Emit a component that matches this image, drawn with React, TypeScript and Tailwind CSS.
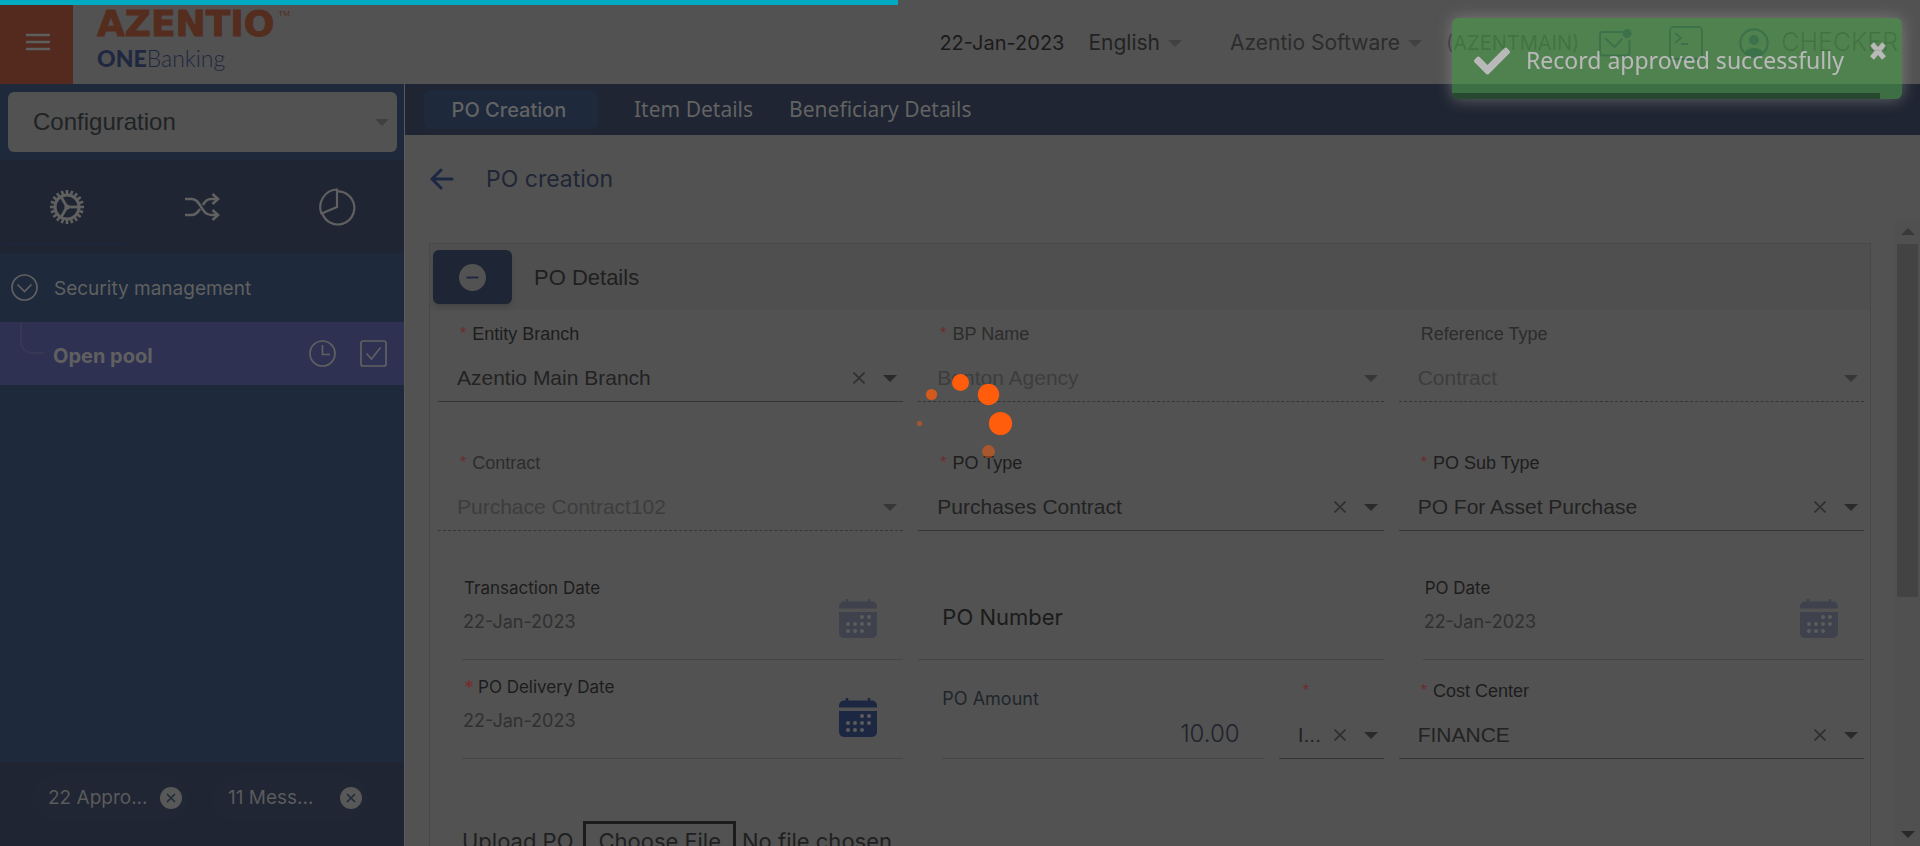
import React, { useId } from "react";
import { FaCheck } from "react-icons/fa";

const inter = "font-[Inter,sans-serif]";
const arial = "font-['Liberation_Sans',Arial,sans-serif]";
const humanist = "font-['Noto_Sans',sans-serif]";

function Caret({ className = "" }: { className?: string }) {
  return (
    <svg width="14" height="7" viewBox="0 0 14 7" className={`shrink-0 ${className}`} aria-hidden="true">
      <path d="M0 0h14L7 7z" fill="currentColor" />
    </svg>
  );
}

function GearIcon() {
  const teeth = Array.from({ length: 20 }, (_, i) => i * 18);
  return (
    <svg width="34" height="34" viewBox="-17 -17 34 34" fill="none" stroke="currentColor" aria-hidden="true">
      <circle r="12" strokeWidth="3" />
      {teeth.map((a) => (
        <path key={a} d="M13 0H17" strokeWidth="2.6" transform={`rotate(${a})`} />
      ))}
      <circle r="2.6" fill="currentColor" stroke="none" />
      {[0, 120, 240].map((a) => (
        <path key={a} d="M0 0H12" strokeWidth="2.8" transform={`rotate(${a})`} />
      ))}
    </svg>
  );
}

function ShuffleIcon() {
  return (
    <svg width="36" height="30" viewBox="0 0 36 30" fill="none" stroke="currentColor" strokeWidth="2.6" aria-hidden="true">
      <path d="M1 7H8C17 7 17 23 27 23H33" />
      <path d="M1 23H8C12 23 14 20 16 17M19 13C21 9 23 7 27 7H33" />
      <path d="M28.500 2L34 7L28.500 12M28.500 18L34 23L28.500 28" />
    </svg>
  );
}

function PieIcon() {
  return (
    <svg width="38" height="38" viewBox="0 0 38 38" fill="none" stroke="currentColor" strokeWidth="2.2" aria-hidden="true">
      <path d="M19 1.500V19L3.500 25.500A17.500 17.500 0 0 1 19 1.500Z" />
      <path d="M19 3.500A16.500 16.500 0 1 1 4.500 26" />
    </svg>
  );
}

function CalendarIcon() {
  const dots = [[23, 18], [30, 18], [9, 25], [16, 25], [23, 25], [30, 25], [9, 32], [16, 32], [23, 32]];
  return (
    <svg width="38" height="39" viewBox="0 0 38 39" aria-hidden="true">
      <path d="M8 0v4M30 0v4" stroke="currentColor" strokeWidth="2.500" />
      <path d="M5 2.500H33A5 5 0 0 1 38 7.500V9.500H0V7.500A5 5 0 0 1 5 2.500Z" fill="currentColor" />
      <path d="M0 13H38V34A5 5 0 0 1 33 39H5A5 5 0 0 1 0 34Z" fill="currentColor" />
      {dots.map(([x, y]) => (
        <circle key={`${x}-${y}`} cx={x} cy={y} r="2" fill="#5c5c5c" />
      ))}
    </svg>
  );
}

function Star() {
  return <span className="mr-1.5 text-base leading-4 text-[#6d2b2c]">*</span>;
}

type SelectProps = { label?: string; name?: string; value: string; required?: boolean; disabled?: boolean; compact?: boolean; short?: boolean };

function SelectField({ label, name, value, required, disabled, compact, short }: SelectProps) {
  const id = useId();
  return (
    <div className={`flex flex-col border-b border-[#363636] ${disabled ? "border-dashed" : ""} ${short ? "h-[86px]" : "h-[92px]"} ${arial}`}>
      <label htmlFor={id} className={`flex h-6 items-center text-lg ${short ? "mt-1.5" : "mt-3"} ${compact ? "pl-6" : "pl-[22px]"} ${disabled ? "text-[#2c2c2c]" : "text-[#1d1d1d]"}`}>
        {required && <Star />}
        {label}
      </label>
      <div className="mt-4 flex h-8 items-center pr-1.5 pl-[19px]">
        <select id={id} aria-label={label ? undefined : name} disabled={disabled} className={`min-w-0 flex-1 appearance-none bg-transparent text-[21px] leading-8 opacity-100 outline-none ${disabled ? "text-[#3d3d3d]" : "text-[#222]"}`}>
          <option>{value}</option>
        </select>
        {!disabled && (
          <button type="button" aria-label={`Clear ${label ?? name}`} className="mr-[18px] shrink-0 text-[#2f2f2f]">
            <svg width="12" height="12" viewBox="0 0 12 12" stroke="currentColor" strokeWidth="1.600">
              <path d="M.5.5l11 11M11.500.5l-11 11" />
            </svg>
          </button>
        )}
        <Caret className={disabled ? "text-[#373737]" : "text-[#2a2a2a]"} />
      </div>
    </div>
  );
}

function DateField({ label, required, active }: { label: string; required?: boolean; active?: boolean }) {
  const id = useId();
  return (
    <div className={`ml-6 flex h-[83px] items-start border-b border-[#454545] ${inter}`}>
      <div className="min-w-0 flex-1">
        <label htmlFor={id} className="flex h-6 items-center pl-0.5 text-[17px] text-[#1c1c1c]">
          {required && <span className="mr-1 text-xl leading-5 text-[#762d31]">*</span>}
          {label}
        </label>
        <input id={id} defaultValue="22-Jan-2023" disabled={!active} className="mt-2 block h-[26px] w-full bg-transparent pl-px text-lg text-[#303030] outline-none" />
      </div>
      <button type="button" aria-label={`Pick ${label}`} className={`mt-[22px] mr-[26px] ${active ? "text-[#1c2741]" : "text-[#3f414d]"}`}>
        <CalendarIcon />
      </button>
    </div>
  );
}

function Chip({ text }: { text: string }) {
  return (
    <div className="flex h-12 items-center justify-between rounded-3xl bg-[#202634] pr-1.5 pl-4">
      <span className="text-[19px] text-[#5b5b5b]">{text}</span>
      <button type="button" aria-label={`Close ${text}`}>
        <svg width="22" height="22" viewBox="0 0 22 22" aria-hidden="true">
          <circle cx="11" cy="11" r="11" fill="#585858" />
          <path d="M7 7l8 8M15 7l-8 8" stroke="#1f2a3b" strokeWidth="1.600" />
        </svg>
      </button>
    </div>
  );
}

function Header() {
  return (
    <header className={`flex h-[84px] shrink-0 items-stretch bg-[#525252] ${inter}`}>
      <button type="button" aria-label="Menu" className="flex w-[73px] items-center justify-center bg-[#532a1d] text-[#5e5e5e]">
        <svg width="24" height="18" viewBox="0 0 24 18" stroke="currentColor" strokeWidth="2.500" className="ml-0.5" aria-hidden="true">
          <path d="M0 2h24M0 9h24M0 16h24" />
        </svg>
      </button>
      <div className="ml-6 flex flex-col">
        <div className="mt-2 flex items-start text-[#542d1f]">
          <span className="font-['DejaVu_Sans',sans-serif] text-[36px] leading-8 font-bold [-webkit-text-stroke:1px]">AZENTIO</span>
          <span className={`ml-1 text-[8px] leading-3 ${arial}`}>TM</span>
        </div>
        <div className="mt-0.5 font-[Lato,sans-serif] text-[23px] leading-8 text-[#1f2840]">
          <span className="font-black">ONE</span>
          <span className="font-light">Banking</span>
        </div>
      </div>
      <div className="ml-auto flex items-center pt-0.5 pr-[22px] text-[21px] text-[#2c2c2c]">
        <span className="text-xl text-[#1b1b1b]">22-Jan-2023</span>
        <button type="button" className="ml-6 flex items-center gap-2 text-[#232323]">
          English <Caret className="text-[#414141]" />
        </button>
        <button type="button" className="ml-12 flex items-center gap-2">
          Azentio Software <Caret className="text-[#414141]" />
        </button>
        <span className="ml-6 text-xl">(AZENTMAIN)</span>
        <a href="#mail" aria-label="Mail" className="ml-5 text-[#1f2840]">
          <svg width="34" height="30" viewBox="0 0 34 30" fill="none" stroke="currentColor" strokeWidth="2" aria-hidden="true">
            <path d="M23 4H3.500A2.500 2.500 0 0 0 1 6.500V25A2.500 2.500 0 0 0 3.500 27.500H28A2.500 2.500 0 0 0 30.500 25V12" />
            <path d="M6 10L15.500 19L23 11" />
            <circle cx="28" cy="5.500" r="4.500" fill="currentColor" stroke="none" />
          </svg>
        </a>
        <a href="#console" aria-label="Console" className="ml-9 text-[#1f2840]">
          <svg width="34" height="34" viewBox="0 0 34 34" fill="none" stroke="currentColor" strokeWidth="1.800" aria-hidden="true">
            <rect x="1" y="1" width="32" height="32" rx="3.500" />
            <path d="M6 7L12 12L6 17M12 18H19" />
          </svg>
        </a>
        <a href="#profile" className="ml-9 flex items-center gap-3 text-[25px] font-light">
          <svg width="30" height="30" viewBox="0 0 30 30" className="text-[#1f2840]" aria-hidden="true">
            <circle cx="15" cy="15" r="13.700" fill="none" stroke="currentColor" strokeWidth="2.200" />
            <circle cx="15" cy="12" r="5" fill="currentColor" />
            <path d="M6 24.500C8 18.500 22 18.500 24 24.500C20 29 10 29 6 24.500Z" fill="currentColor" />
          </svg>
          CHECKER
        </a>
      </div>
    </header>
  );
}

function Sidebar() {
  return (
    <aside className={`flex w-[405px] shrink-0 flex-col border-r border-[#5a5a5a] bg-[#1e293c] text-[#606060] ${inter}`}>
      <div className="py-2 pr-[7px] pl-2">
        <div className="flex h-[60px] items-center rounded-md bg-[#525252] pr-2 pl-[25px]">
          <select aria-label="Module" className={`flex-1 appearance-none bg-transparent text-2xl text-[#202325] outline-none ${arial}`}>
            <option>Configuration</option>
          </select>
          <Caret className="text-[#404040]" />
        </div>
      </div>
      <nav className="grid h-[93px] grid-cols-3 bg-[#1f2532]">
        <button type="button" aria-label="Settings" className="flex flex-col items-center">
          <span className="mt-[30px] block"><GearIcon /></span>
          <span className="mt-auto mb-[7px] block h-[3px] w-[120px] bg-[#1e273a]" />
        </button>
        <button type="button" aria-label="Workflow" className="flex items-center justify-center"><ShuffleIcon /></button>
        <button type="button" aria-label="Reports" className="flex items-center justify-center"><PieIcon /></button>
      </nav>
      <button type="button" className="flex h-[69px] items-center gap-4 pl-[11px] text-[19px]">
        <svg width="27" height="27" viewBox="0 0 27 27" fill="none" stroke="currentColor" strokeWidth="1.700" aria-hidden="true">
          <circle cx="13.500" cy="13.500" r="12.500" />
          <path d="M6.500 10.500L13.500 17.500L20.500 10.500" />
        </svg>
        <span className="pt-1">Security management</span>
      </button>
      <div className="flex h-[63px] items-center bg-[#2f3153]">
        <span className="ml-5 h-8 w-6 self-start rounded-bl-xl border-b-2 border-l-2 border-[#383754]" />
        <a href="#open-pool" className="ml-[9px] flex-1 pt-1 text-[20px] font-bold">Open pool</a>
        <button type="button" aria-label="History" className="mr-6">
          <svg width="27" height="27" viewBox="0 0 27 27" fill="none" stroke="currentColor" strokeWidth="1.700" aria-hidden="true">
            <circle cx="13.500" cy="13.500" r="12.500" />
            <path d="M13.500 5V14.500H21" />
          </svg>
        </button>
        <button type="button" aria-label="Approve" className="mr-[17px]">
          <svg width="27" height="27" viewBox="0 0 27 27" fill="none" stroke="currentColor" strokeWidth="1.700" aria-hidden="true">
            <rect x="1" y="1" width="25" height="25" rx="2" />
            <path d="M6.500 13.500L11.500 19L20.500 7.500" />
          </svg>
        </button>
      </div>
      <div className="mt-auto grid h-[84px] grid-cols-2 gap-6 bg-[#1f2532] pt-3 pr-9 pl-8">
        <Chip text="22 Appro..." />
        <Chip text="11 Mess..." />
      </div>
    </aside>
  );
}

function PoDetails() {
  return (
    <section className="h-full overflow-hidden border border-b-0 border-[#484848]">
      <div className="flex h-[66px] items-center bg-[#4f4f4f] pl-[3px]">
        <button type="button" aria-label="Collapse PO Details" className="flex h-[54px] w-[79px] items-center justify-center rounded-md bg-[#1e2534] shadow-md">
          <svg width="27" height="27" viewBox="0 0 27 27" aria-hidden="true">
            <circle cx="13.500" cy="13.500" r="13.500" fill="#525252" />
            <path d="M7.500 13.500h12" stroke="#1e2840" strokeWidth="2" />
          </svg>
        </button>
        <h2 className={`ml-[22px] text-[22px] text-[#202020] ${arial}`}>PO Details</h2>
      </div>
      <form className="pr-1.5 pl-2">
        <div className="grid grid-cols-3 gap-x-[15px]">
          <SelectField label="Entity Branch" value="Azentio Main Branch" required />
          <SelectField label="BP Name" value="Benton Agency" required disabled />
          <SelectField label="Reference Type" value="Contract" disabled />
        </div>
        <div className="mt-[37px] grid grid-cols-3 gap-x-[15px]">
          <SelectField label="Contract" value="Purchace Contract102" required disabled />
          <SelectField label="PO Type" value="Purchases Contract" required />
          <SelectField label="PO Sub Type" value="PO For Asset Purchase" required />
        </div>
        <div className="mt-[46px] grid grid-cols-3 gap-x-[15px]">
          <DateField label="Transaction Date" />
          <label className={`flex flex-col border-b border-[#454545] ${inter}`}>
            <input placeholder="PO Number" className="mt-4 h-12 bg-transparent pl-6 text-[22px] outline-none placeholder:text-[#1b1b1b]" />
          </label>
          <DateField label="PO Date" />
        </div>
        <div className="mt-4 grid grid-cols-3 gap-x-[15px]">
          <DateField label="PO Delivery Date" required active />
          <div className={`flex ${inter}`}>
            <div className="ml-6 flex flex-1 flex-col border-b border-[#454545]">
              <label htmlFor="po-amount" className="mt-[11px] h-6 text-[18px] leading-6 text-[#20262b]">PO Amount</label>
              <input id="po-amount" defaultValue="10.00" className="mt-2 h-[30px] w-full bg-transparent pr-6 text-right text-2xl font-light text-[#20232b] outline-none" />
            </div>
            <div className="ml-[15px] w-[105px]">
              <div className="-mt-[3px]"><SelectField name="Currency" value="I..." required compact short /></div>
            </div>
          </div>
          <div className="-mt-[3px]"><SelectField label="Cost Center" value="FINANCE" required short /></div>
        </div>
        <div className={`mt-[62px] ml-6 flex items-center gap-2.5 text-[22px] text-[#202020] ${inter}`}>
          <label htmlFor="upload">Upload PO</label>
          <input
            id="upload"
            type="file"
            className="w-96 file:mr-1.5 file:h-10 file:border-[3px] file:border-[#1c1c1c] file:bg-transparent file:px-3 file:text-[#202020]"
          />
        </div>
      </form>
    </section>
  );
}

function Main() {
  return (
    <main className={`flex min-w-0 flex-1 flex-col bg-[#525252] ${inter}`}>
      <nav className={`flex h-[51px] shrink-0 items-center bg-[#1f2532] pl-[19px] text-[#636363] ${humanist}`}>
        <button type="button" className={`h-[39px] w-[174px] rounded-md bg-[#1e293c] pr-1 text-xl font-medium ${inter}`}>PO Creation</button>
        <button type="button" className="ml-9 text-[21px]">Item Details</button>
        <button type="button" className="ml-9 text-[21px]">Beneficiary Details</button>
      </nav>
      <div className="flex h-[84px] shrink-0 items-center gap-8 pt-1 pl-[25px] text-[#1f2636]">
        <button type="button" aria-label="Back" className="text-[#1c2743]">
          <svg width="24" height="22" viewBox="0 0 24 22" fill="none" stroke="currentColor" strokeWidth="3" strokeLinecap="round" strokeLinejoin="round" aria-hidden="true">
            <path d="M11 2L2 11L11 20M2 11H22" />
          </svg>
        </button>
        <h1 className="text-[23px]">PO creation</h1>
      </div>
      <div className="flex min-h-0 flex-1">
        <div className="min-w-0 flex-1 pt-6 pr-6 pl-6">
          <PoDetails />
        </div>
        <div className="flex w-[25px] flex-col items-center bg-[#505050]" aria-hidden="true">
          <Caret className="my-[9px] rotate-180 text-[#393939]" />
          <div className="h-[353px] w-[21px] bg-[#434343]" />
          <Caret className="mt-auto mb-2 text-[#292929]" />
        </div>
      </div>
    </main>
  );
}

function Spinner() {
  return (
    <svg role="status" aria-label="Loading" width="120" height="120" viewBox="-60 -60 120 120" className="fixed top-1/2 left-1/2 -translate-x-1/2 -translate-y-1/2" fill="#ff5c0c">
      <circle cx="0.500" cy="-40.500" r="8.500" />
      <circle cx="28.500" cy="-28.500" r="10.700" />
      <circle cx="40.500" cy="0.500" r="11.600" />
      <circle cx="28.500" cy="28.500" r="6.400" opacity=".5" />
      <circle cx="-40.500" cy="0.500" r="2.700" opacity=".45" />
      <circle cx="-28.500" cy="-28.500" r="5.600" opacity=".75" />
    </svg>
  );
}

function Toast() {
  return (
    <div role="alert" className={`fixed top-[18px] right-[18px] h-[81px] w-[450px] overflow-hidden rounded-md bg-[#51a351] text-white opacity-60 shadow-[0_0_16px_#999] ${humanist}`}>
      <div className="flex h-full items-center pt-1 pl-[22px]">
        <FaCheck size={36} aria-hidden="true" />
        <span className="ml-4 text-[23px]">Record approved successfully</span>
      </div>
      <button type="button" aria-label="Dismiss" className="absolute top-6 right-4">
        <svg width="16" height="18" viewBox="0 0 16 18" stroke="currentColor" strokeWidth="5" aria-hidden="true">
          <path d="M2 2l12 14M14 2L2 16" />
        </svg>
      </button>
      <div className="absolute bottom-0 left-0 h-1.5 w-[95%] bg-black/40" />
    </div>
  );
}

export default function App() {
  return (
    <div className="flex h-screen flex-col overflow-hidden bg-[#525252]">
      <Header />
      <div className="flex min-h-0 flex-1">
        <Sidebar />
        <Main />
      </div>
      <div className="fixed top-0 left-0 h-[5px] w-[898px] bg-[#00abc1]" role="progressbar" aria-label="Page loading" />
      <Spinner />
      <Toast />
    </div>
  );
}
